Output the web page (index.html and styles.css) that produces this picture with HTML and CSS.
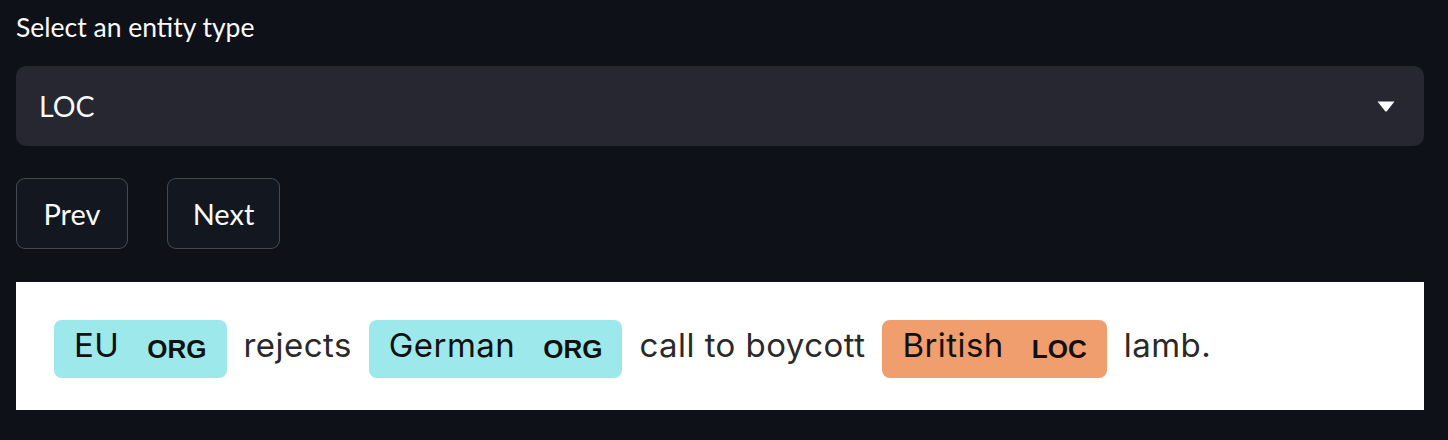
FILE: index.html
```html
<!DOCTYPE html>
<html lang="en">
<head>
<meta charset="utf-8">
<title>Entity viewer</title>
<link rel="stylesheet" href="styles.css">
</head>
<body>
<main class="app">
  <label class="field-label">Select an entity type</label>
  <div class="select">
    <span class="select-value">LOC</span>
    <svg class="select-arrow" width="18" height="11" viewBox="0 0 18 11"><path d="M0.5 0.5 H17.5 L10 10 Q9 11 8 10 Z" fill="#fafafa"/></svg>
  </div>
  <div class="buttons">
    <button class="btn btn-prev">Prev</button>
    <button class="btn btn-next">Next</button>
  </div>
  <div class="doc">
    <mark class="ent ent-org"><span class="ent-text">EU</span><span class="ent-label">ORG</span></mark>
    <span class="word">rejects</span>
    <mark class="ent ent-org"><span class="ent-text">German</span><span class="ent-label">ORG</span></mark>
    <span class="word">call to boycott</span>
    <mark class="ent ent-loc"><span class="ent-text">British</span><span class="ent-label">LOC</span></mark>
    <span class="word">lamb.</span>
  </div>
</main>
</body>
</html>
```
FILE: styles.css
```css
html, body {
  margin: 0;
  padding: 0;
  background: #0e1117;
}
.app {
  padding: 10px 24px 0 16px;
  display: flex;
  flex-direction: column;
  font-family: Lato, "Noto Sans", sans-serif;
  color: #fafafa;
}
.field-label {
  display: block;
  font-size: 26.5px;
  line-height: 34px;
  height: 34px;
}
.select {
  margin-top: 22px;
  height: 80px;
  background: #262730;
  border-radius: 10px;
  display: flex;
  align-items: center;
  justify-content: space-between;
  padding: 0 29px 0 23px;
  box-sizing: border-box;
}
.select-value {
  font-size: 28.5px;
}
.select-arrow {
  display: block;
}
.buttons {
  display: flex;
  gap: 39px;
  margin-top: 32px;
}
.btn {
  height: 71px;
  box-sizing: border-box;
  border: 1px solid rgba(250, 250, 250, 0.22);
  border-radius: 9px;
  background: #131720;
  color: #fafafa;
  font-family: Lato, "Noto Sans", sans-serif;
  font-size: 29px;
  padding: 0;
}
.btn-prev { width: 112px; }
.btn-next { width: 113px; }
.doc {
  margin-top: 33px;
  background: #ffffff;
  height: 128px;
  box-sizing: border-box;
  padding: 38px 38px 32px;
  display: flex;
  align-items: center;
  gap: 17px;
  font-family: Inter, "Liberation Sans", sans-serif;
  font-size: 33px;
  letter-spacing: 0.45px;
  color: #2a2a2a;
}
.word {
  white-space: pre;
  position: relative;
  top: -4px;
}
.ent {
  display: flex;
  align-items: center;
  height: 58px;
  box-sizing: border-box;
  padding: 0 20px;
  border-radius: 8px;
  color: #111;
  line-height: 1;
}
.ent-text {
  position: relative;
  top: -4px;
}
.ent-org { background: #9de8ea; }
.ent-loc { background: #f09e6e; }
.ent-label {
  font-family: "Liberation Sans", Arial, sans-serif;
  font-size: 26px;
  font-weight: 700;
  letter-spacing: 0;
  margin-left: 28px;
  position: relative;
  top: 0;
}
```
